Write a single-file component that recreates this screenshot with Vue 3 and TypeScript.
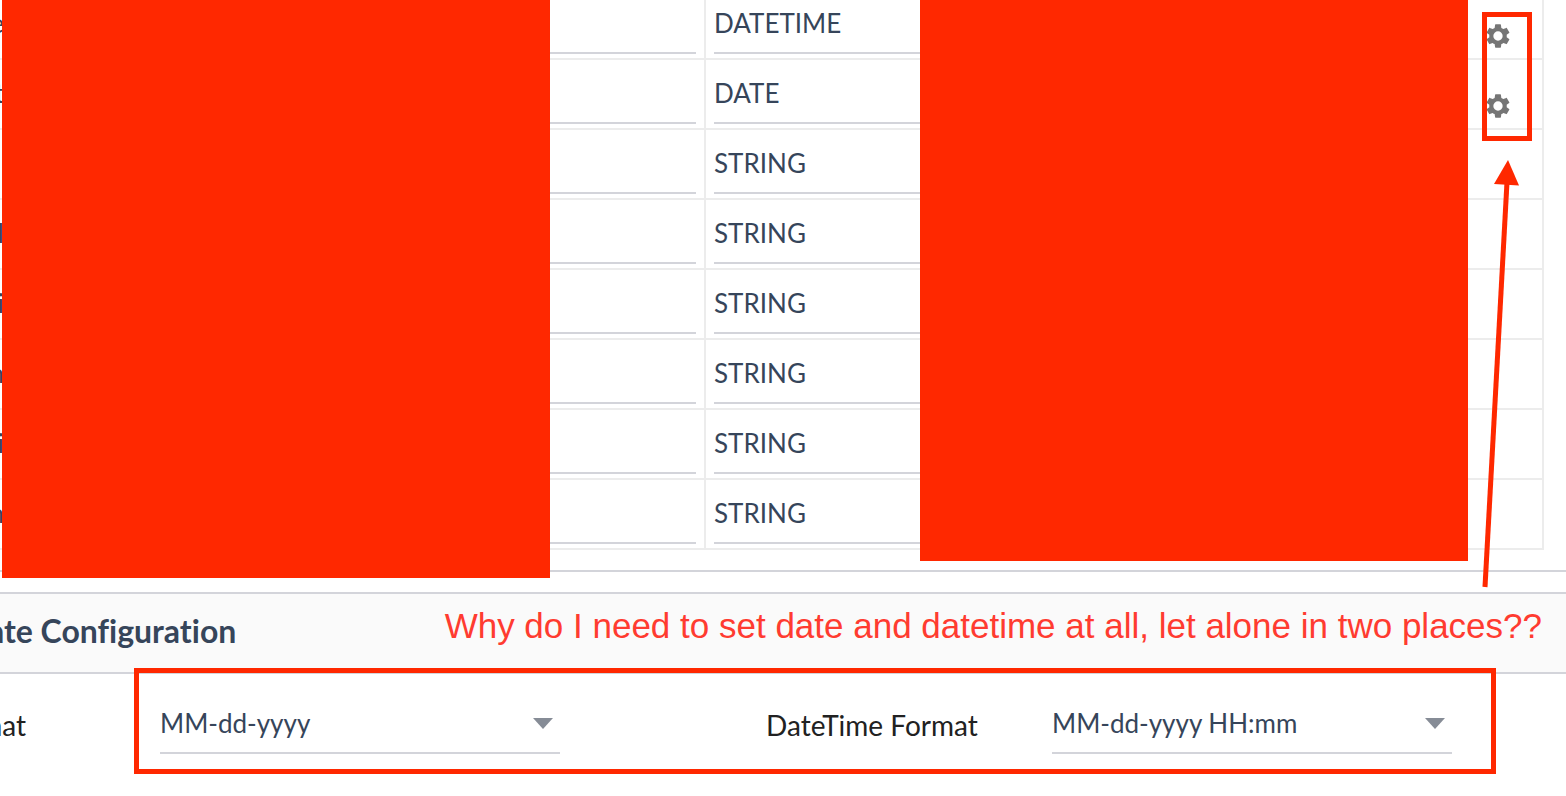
<script setup lang="ts">
import { ref } from 'vue'

interface FieldRow {
  name: string
  type: string
  configurable: boolean
}

const rows = ref<FieldRow[]>([
  { name: 'e', type: 'DATETIME', configurable: true },
  { name: 't', type: 'DATE', configurable: true },
  { name: '', type: 'STRING', configurable: false },
  { name: 'l', type: 'STRING', configurable: false },
  { name: 'i', type: 'STRING', configurable: false },
  { name: 'n', type: 'STRING', configurable: false },
  { name: 'i', type: 'STRING', configurable: false },
  { name: 'n', type: 'STRING', configurable: false },
])

const types = ['STRING', 'DATE', 'DATETIME']
const dateFormat = ref('MM-dd-yyyy')
const dateTimeFormat = ref('MM-dd-yyyy HH:mm')
</script>

<template>
  <main class="page">
    <section class="fields">
      <table class="field-table">
        <colgroup>
          <col class="col-name" />
          <col class="col-type" />
          <col />
          <col class="col-action" />
        </colgroup>
        <tbody>
          <tr v-for="(row, i) in rows" :key="i">
            <td>
              <div class="name-cell">
                <span class="name">{{ row.name }}</span>
                <input class="control" type="text" :aria-label="`Field ${i + 1} label`" />
              </div>
            </td>
            <td class="type-cell">
              <select v-model="row.type" class="control" :aria-label="`Field ${i + 1} type`">
                <option v-for="t in types" :key="t">{{ t }}</option>
              </select>
            </td>
            <td></td>
            <td class="action-cell">
              <button v-if="row.configurable" class="gear" type="button" aria-label="Configure field">
                <svg viewBox="0 0 24 24" aria-hidden="true">
                  <path d="M19.43 12.98c.04-.32.07-.64.07-.98s-.03-.66-.07-.98l2.11-1.65c.19-.15.24-.42.12-.64l-2-3.46c-.12-.22-.39-.3-.61-.22l-2.49 1c-.52-.4-1.08-.73-1.69-.98l-.38-2.65C14.46 2.18 14.25 2 14 2h-4c-.25 0-.46.18-.49.42l-.38 2.65c-.61.25-1.17.59-1.69.98l-2.49-1c-.23-.09-.49 0-.61.22l-2 3.46c-.13.22-.07.49.12.64l2.11 1.65c-.04.32-.07.65-.07.98s.03.66.07.98l-2.11 1.65c-.19.15-.24.42-.12.64l2 3.46c.12.22.39.3.61.22l2.49-1c.52.4 1.08.73 1.69.98l.38 2.65c.03.24.24.42.49.42h4c.25 0 .46-.18.49-.42l.38-2.65c.61-.25 1.17-.59 1.69-.98l2.49 1c.23.09.49 0 .61-.22l2-3.46c.12-.22.07-.49-.12-.64l-2.11-1.65zM12 16a4 4 0 1 1 0-8 4 4 0 0 1 0 8z" />
                </svg>
              </button>
            </td>
          </tr>
        </tbody>
      </table>
    </section>

    <header class="section-head">
      <h2>Date Configuration</h2>
    </header>

    <form class="formats">
      <label class="label-date" for="date-format">Date Format</label>
      <div class="picker">
        <select id="date-format" v-model="dateFormat" class="control">
          <option>MM-dd-yyyy</option>
          <option>dd-MM-yyyy</option>
        </select>
        <svg class="caret" viewBox="0 0 20 11" aria-hidden="true"><path d="M0 0h20L10 11z" /></svg>
      </div>
      <label class="label-datetime" for="datetime-format">DateTime Format</label>
      <div class="picker">
        <select id="datetime-format" v-model="dateTimeFormat" class="control">
          <option>MM-dd-yyyy HH:mm</option>
          <option>dd-MM-yyyy HH:mm</option>
        </select>
        <svg class="caret" viewBox="0 0 20 11" aria-hidden="true"><path d="M0 0h20L10 11z" /></svg>
      </div>
    </form>

    <div class="redaction redaction-left"></div>
    <div class="redaction redaction-right"></div>
    <div class="outline outline-gears"></div>
    <div class="outline outline-formats"></div>
    <svg class="arrow" viewBox="0 0 40 430" aria-hidden="true">
      <path class="shaft" d="M8 427L30 22" />
      <path d="M31 0L42 25.500L17 24z" />
    </svg>
    <p class="remark">Why do I need to set date and datetime at all, let alone in two places??</p>
  </main>
</template>

<style>
body {
  margin: 0;
  background: #fff;
}
</style>

<style scoped>
.page {
  position: relative;
  min-height: 100vh;
  overflow: hidden;
  box-sizing: border-box;
  font-family: Lato, "Liberation Sans", sans-serif;
  font-size: 26px;
  font-variant-ligatures: none;
  line-height: 32px;
  color: #36455a;
}

.fields {
  padding: 0 22px 20px 0;
  border-bottom: 2px solid #d3d4da;
}

.field-table {
  width: 100%;
  margin-top: -10px;
  table-layout: fixed;
  border-collapse: separate;
  border-spacing: 0;
}

.col-name {
  width: 706px;
}

.col-type {
  width: 300px;
}

.col-action {
  width: 70px;
}

td {
  height: 68px;
  padding: 0;
  border-bottom: 2px solid #ececec;
  vertical-align: top;
}

td:first-child,
td:last-child {
  border-right: 2px solid #ececec;
}

.control {
  display: block;
  box-sizing: border-box;
  width: 100%;
  height: 64px;
  margin: 0;
  padding: 4px 0 0;
  border: 0;
  border-bottom: 2px solid #d3d4da;
  border-radius: 0;
  outline: 0;
  background: transparent;
  appearance: none;
  font: inherit;
  color: inherit;
}

.name-cell {
  display: grid;
  grid-template-columns: 4px 1fr;
  column-gap: 4px;
  padding-right: 8px;
}

.name {
  display: flex;
  justify-content: flex-end;
  padding-top: 17px;
}

.type-cell {
  padding-left: 8px;
}

.gear {
  display: block;
  width: 28px;
  height: 28px;
  margin: 32px 0 0 10px;
  padding: 0;
  border: 0;
  background: none;
}

.gear svg {
  display: block;
  width: 28px;
  height: 28px;
  fill: #757575;
}

.section-head {
  display: flex;
  align-items: center;
  box-sizing: border-box;
  height: 82px;
  margin-top: 20px;
  padding-bottom: 4px;
  border-top: 2px solid #d3d4da;
  border-bottom: 2px solid #d3d4da;
  background: #fafafa;
}

h2 {
  margin: 0 0 0 -36px;
  font-size: 32px;
  font-weight: 700;
  line-height: 36px;
}

.formats {
  display: grid;
  grid-template-columns: 160px 400px 492px 400px;
  align-items: start;
  padding-top: 16px;
}

.formats label {
  padding-top: 19px;
  font-size: 28px;
  color: #212121;
  white-space: nowrap;
}

.formats .label-date {
  display: flex;
  justify-content: flex-end;
  padding-right: 134px;
}

.formats .label-datetime {
  padding-left: 206px;
}

.picker {
  position: relative;
}

.caret {
  position: absolute;
  top: 28px;
  right: 7px;
  width: 20px;
  height: 11px;
  fill: #868c96;
  pointer-events: none;
}

.redaction {
  position: absolute;
  top: 0;
  width: 548px;
  background: #ff2800;
}

.redaction-left {
  left: 2px;
  height: 578px;
}

.redaction-right {
  right: 98px;
  height: 561px;
}

.outline {
  position: absolute;
  box-sizing: border-box;
  border: 5px solid #ff2800;
  pointer-events: none;
}

.outline-gears {
  top: 12px;
  right: 34px;
  width: 50px;
  height: 129px;
}

.outline-formats {
  top: 668px;
  left: 134px;
  right: 70px;
  height: 106px;
}

.arrow {
  position: absolute;
  top: 160px;
  right: 49px;
  width: 40px;
  height: 430px;
  overflow: visible;
  fill: #ff2800;
}

.shaft {
  fill: none;
  stroke: #ff2800;
  stroke-width: 5;
}

.remark {
  position: absolute;
  top: 606px;
  right: 24px;
  margin: 0;
  font-family: "Liberation Sans", Arial, sans-serif;
  font-size: 35px;
  line-height: 40px;
  color: #ff3b30;
  white-space: nowrap;
}
</style>
